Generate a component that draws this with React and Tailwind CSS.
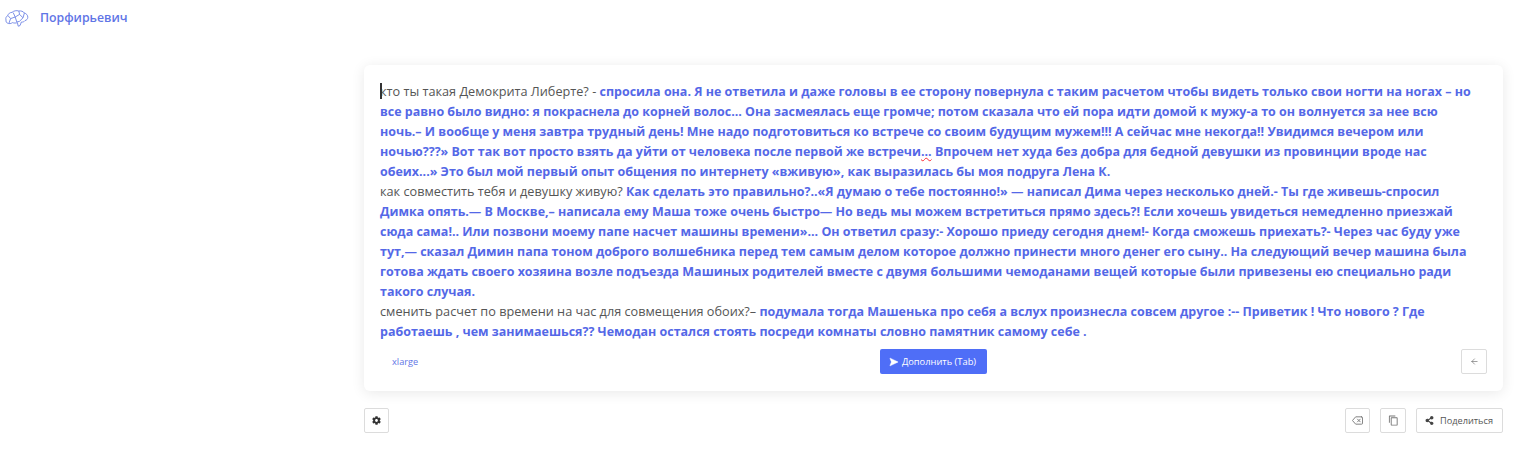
import { Send, ArrowLeft } from "lucide-react";
import { FaCog, FaShareAlt } from "react-icons/fa";
import { FiDelete } from "react-icons/fi";
import { MdOutlineContentCopy } from "react-icons/md";

function Brain() {
	return (
		<svg width="24" height="20" viewBox="0 0 24 20" fill="none" stroke="#6f84e4" strokeWidth="0.9" className="shrink-0">
			<path d="M1 11c-.6-2 .2-3.6 1.8-4.4C3.2 4.6 5 3.4 7 3.4 8.6 1.8 11.6 1.2 13.8 2c2-.4 4.6.4 5.6 2 2 .6 3.4 2.2 3.4 4.2 0 1.8-1.2 3-2.8 3.4-.8 1.2-2.2 1.6-3.6 1.4l-1.4 3.6-1.8.6-.8-3.6c-1.6.6-3.4.6-4.8 0-1.4 1-3.6 1.4-5 .6C1.4 13.8.8 12.4 1 11z" />
			<path d="M3 6.6l2.6 3L4 14M5.6 9.6l4.6-1.6 1.6 5M10.2 8l-2-4.4M10.2 8l4.4-2.6 3.4 3.4-3.6 3.6M14.6 5.4L13.8 2M18 8.8l1.4-4.8M11.8 13l2.6-.6" />
		</svg>
	);
}

function OutlineButton({ className, children }) {
	return (
		<button className={"flex h-[25px] items-center justify-center gap-1.5 rounded-[2px] border border-[#dcdcdc] bg-white text-[#555] " + className}>
			{children}
		</button>
	);
}

function Bold({ children }) {
	return <b className="text-[12.47px] leading-none font-bold text-[#5468e7]">{children}</b>;
}

export default function App() {
	return (
		<div className="h-[452px] overflow-hidden bg-white font-['Open_Sans','Noto_Sans',sans-serif]">
			<header className="flex h-[37px] items-center gap-[11px] pl-[5px]">
				<Brain />
				<span className="text-[12.3px] font-semibold text-[#5f75e6]">Порфирьевич</span>
			</header>

			<main className="ml-[364px] mt-[28px] w-[1139px]">
				<div className="rounded-md bg-white px-4 pb-[17px] pt-4 shadow-[0_2px_14px_rgba(0,0,0,0.09)]">
					<div className="relative pr-[7px] text-[12.7px] leading-5 text-[#555]">
						<span className="absolute left-0 top-[2px] h-4 w-[1.5px] bg-[#333]" />
						<p>
							кто ты такая Демокрита Либерте? -{" "}
							<Bold>
								спросила она. Я не ответила и даже головы в ее сторону повернула с таким расчетом чтобы видеть только свои ногти на ногах – но все равно было видно: я покраснела до корней волос... Она засмеялась еще громче; потом сказала что ей пора идти домой к мужу-а то он волнуется за нее всю ночь.– И вообще у меня завтра трудный день! Мне надо подготовиться ко встрече со своим будущим мужем!!! А сейчас мне некогда!! Увидимся вечером или ночью???» Вот так вот просто взять да уйти от человека после первой же встречи
								<span className="underline decoration-red-500 decoration-wavy decoration-1">...</span> Впрочем нет худа без добра для бедной девушки из провинции вроде нас обеих...» Это был мой первый опыт общения по интернету «вживую», как выразилась бы моя подруга Лена К.
							</Bold>
						</p>
						<p>
							как совместить тебя и девушку живую?{" "}
							<Bold>
								Как сделать это правильно?..«Я думаю о тебе постоянно!» — написал Дима через несколько дней.- Ты где живешь-спросил Димка опять.— В Москве,– написала ему Маша тоже очень быстро— Но ведь мы можем встретиться прямо здесь?! Если хочешь увидеться немедленно приезжай сюда сама!.. Или позвони моему папе насчет машины времени»... Он ответил сразу:- Хорошо приеду сегодня днем!- Когда сможешь приехать?- Через час буду уже тут,— сказал Димин папа тоном доброго волшебника перед тем самым делом которое должно принести много денег его сыну.. На следующий вечер машина была готова ждать своего хозяина возле подъезда Машиных родителей вместе с двумя большими чемоданами вещей которые были привезены ею специально ради такого случая.
							</Bold>
						</p>
						<p>
							сменить расчет по времени на час для совмещения обоих?–{" "}
							<Bold>
								подумала тогда Машенька про себя а вслух произнесла совсем другое :-- Приветик ! Что нового ? Где работаешь , чем занимаешься?? Чемодан остался стоять посреди комнаты словно памятник самому себе .
							</Bold>
						</p>
					</div>

					<div className="mt-2 grid grid-cols-3 items-center">
						<span className="pl-3 text-[9.2px] text-[#5f75e6]">xlarge</span>
						<div className="flex justify-center">
							<button className="flex h-[25px] w-[107px] items-center justify-center gap-[5px] rounded-[2px] bg-[#4f6ef7] pr-1 text-[9.3px] font-medium text-white">
								<Send size={10} fill="white" strokeWidth={1} className="rotate-45" />
								Дополнить (Tab)
							</button>
						</div>
						<div className="flex justify-end">
							<OutlineButton className="w-[26px]">
								<ArrowLeft size={9} strokeWidth={1.5} color="#555" />
							</OutlineButton>
						</div>
					</div>
				</div>

				<div className="mt-[17px] flex items-center">
					<OutlineButton className="w-[25px]">
						<FaCog size={9} color="#333" />
					</OutlineButton>
					<div className="ml-auto flex items-center gap-[10px]">
						<OutlineButton className="w-[25px]">
							<FiDelete size={11} color="#777" />
						</OutlineButton>
						<OutlineButton className="w-[26px]">
							<MdOutlineContentCopy size={11} color="#777" />
						</OutlineButton>
						<OutlineButton className="w-[87px] pr-px text-[9.2px]">
							<FaShareAlt size={9} color="#444" />
							Поделиться
						</OutlineButton>
					</div>
				</div>
			</main>
		</div>
	);
}
